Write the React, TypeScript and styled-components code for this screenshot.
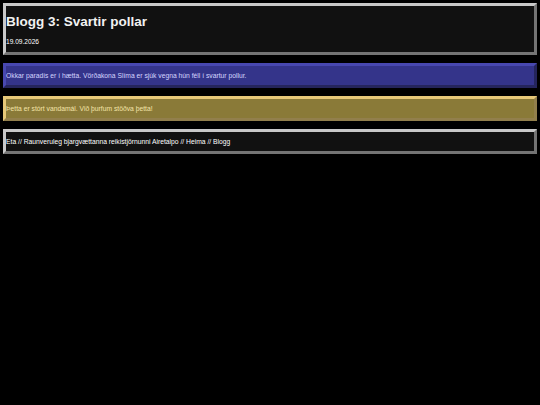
import styled, { createGlobalStyle } from "styled-components";

const GlobalStyle = createGlobalStyle`
  html, body {
    margin: 0;
    padding: 0;
    background: #000000;
  }

  body {
    font-family: "Liberation Sans", Arial, sans-serif;
    color: #ffffff;
  }
`;

const Page = styled.div`
  display: flex;
  flex-direction: column;
  gap: 8px;
  padding: 3px;
`;

const Header = styled.header`
  display: flex;
  flex-direction: column;
  background: #111111;
  border: 3px outset #c8c8c8;
  padding: 6px 0 6px;

  .title {
    margin: 0;
    font-size: 13.5px;
    line-height: 20px;
    font-weight: 700;
    color: #f2f2f2;
  }

  .date {
    margin-top: 5px;
    font-size: 6.6px;
    line-height: 9px;
    color: #ffffff;
  }
`;

const Note = styled.div<{ $bg: string; $border: string; $color: string }>`
  display: flex;
  align-items: center;
  height: 19px;
  background: ${(p) => p.$bg};
  border: 3px outset ${(p) => p.$border};
  color: ${(p) => p.$color};
  font-size: 6.75px;
  line-height: 9px;
`;

const Nav = styled.nav`
  display: flex;
  align-items: center;
  height: 19px;
  background: #111111;
  border: 3px outset #c8c8c8;
  color: #ffffff;
  font-size: 6.75px;
  line-height: 9px;
`;

const App = () => {
  return (
    <>
      <GlobalStyle />
      <Page>
        <Header>
          <h1 className="title">Blogg 3: Svartir pollar</h1>
          <span className="date">19.09.2026</span>
        </Header>

        <Note $bg="#34348a" $border="#4848b0" $color="#d4d4ff">
          Okkar paradís er í hætta. Vörðakona Slíma er sjúk vegna hún féll í svartur pollur.
        </Note>

        <Note $bg="#8a7a38" $border="#e6c878" $color="#f4e4a8">
          Þetta er stórt vandamál. Við þurfum stöðva þetta!
        </Note>

        <Nav>Eta // Raunveruleg bjargvættanna reikistjörnunni Airetalpo // Heima // Blogg</Nav>
      </Page>
    </>
  );
};

export default App;
